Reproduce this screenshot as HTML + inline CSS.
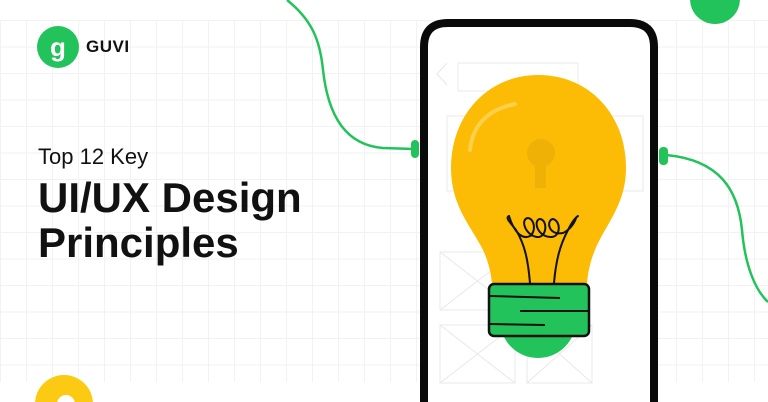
<!DOCTYPE html>
<html><head><meta charset="utf-8"><style>
html,body{margin:0;padding:0;overflow:hidden}
body{width:768px;height:402px;overflow:hidden;position:relative;background:#fff;font-family:"Liberation Sans",sans-serif}
.grid{position:absolute;left:0;top:20px;width:768px;height:362px;
background-image:linear-gradient(to right,#f2f2f2 1px,transparent 1px),linear-gradient(to bottom,#f2f2f2 1px,transparent 1px);
background-size:26px 26.5px;background-position:0 0}
.t{position:absolute;left:38px;color:#111;white-space:nowrap}
</style></head><body>
<div class="grid"></div>
<svg width="768" height="402" style="position:absolute;left:0;top:0;overflow:hidden">
<circle cx="715" cy="-1" r="25" fill="#22c35a"/>
<circle cx="64" cy="404" r="29" fill="#fcca12"/>
<circle cx="66" cy="404" r="9" fill="#fff"/>
<path d="M287 0 C312 20 320 40 323 70 C328 115 345 145 383 148 L414 149" fill="none" stroke="#22c35a" stroke-width="2.5"/>
<path d="M666 155 C720 160 738 190 742 230 C745 265 755 290 768 302" fill="none" stroke="#22c35a" stroke-width="2.5"/>
<rect x="411" y="140" width="8" height="18" rx="4" fill="#22c35a"/>
<rect x="659" y="147" width="9" height="18" rx="4" fill="#22c35a"/>
<path d="M424 410 L424 47 Q424 23 448 23 L630 23 Q654 23 654 47 L654 410" fill="#fff" stroke="#0a0a0a" stroke-width="8"/>
<g stroke="#e8e8e8" stroke-width="1" fill="none">
<rect x="458" y="63" width="120" height="28"/>
<rect x="447" y="116" width="196" height="75"/>
<rect x="440" y="252" width="75" height="58"/><path d="M440 252 L515 310 M515 252 L440 310"/>
<rect x="440" y="325" width="75" height="58"/><path d="M440 325 L515 383 M515 325 L440 383"/>
<rect x="527" y="325" width="65" height="58"/><path d="M527 325 L592 383 M592 325 L527 383"/>
<path d="M447 63 L437 74 L447 85"/>
</g>
<circle cx="538" cy="320" r="38" fill="#22c35a"/>
<path d="M538 75 C590 75 626 115 626 168 C626 205 605 225 595 250 C590 262 588 272 587 284 L492 284 C491 272 488 260 482 248 C470 225 451 205 451 168 C451 115 488 75 538 75 Z" fill="#fcbb05"/>
<path d="M470 150 C472 128 485 110 515 104" fill="none" stroke="#fdd04a" stroke-width="4" stroke-linecap="round"/>
<circle cx="541" cy="153" r="14" fill="#f0b106"/>
<rect x="535" y="155" width="11" height="33" fill="#f0b106"/>
<g fill="none" stroke="#111" stroke-width="2" stroke-linecap="round">
<path d="M530 283 C528 260 525 245 516 230 C510 222 505 218 509 216"/>
<path d="M554 283 C556 260 560 245 568 230 C572 222 575 218 578 216"/>
<path d="M509 216 C514 232 522 240 530 236 C536 232 535 219 528 218 C520 219 525 235 537 237 C547 238 548 220 540 219 C533 220 537 237 551 237 C561 237 561 221 553 219 C546 220 548 236 563 233 C570 230 575 222 576 218"/>
</g>
<rect x="489" y="284" width="100" height="52" rx="5" fill="#22c35a" stroke="#111" stroke-width="2.5"/>
<path d="M490 296 L560 298 M520 311 L588 311 M490 324 L545 325" stroke="#111" stroke-width="2"/>
<circle cx="58" cy="47" r="21" fill="#22c35a"/>
<text x="58" y="56" text-anchor="middle" font-family="Liberation Sans" font-weight="bold" font-size="26" fill="#fff">g</text>
</svg>
<div class="t" style="left:86px;top:37px;font-size:17px;font-weight:bold;letter-spacing:0.5px">GUVI</div>
<div class="t" style="top:144px;font-size:22px">Top 12 Key</div>
<div class="t" style="top:174px;font-size:42px;font-weight:bold">UI/UX Design</div>
<div class="t" style="top:219px;font-size:42px;font-weight:bold">Principles</div>
</body></html>
